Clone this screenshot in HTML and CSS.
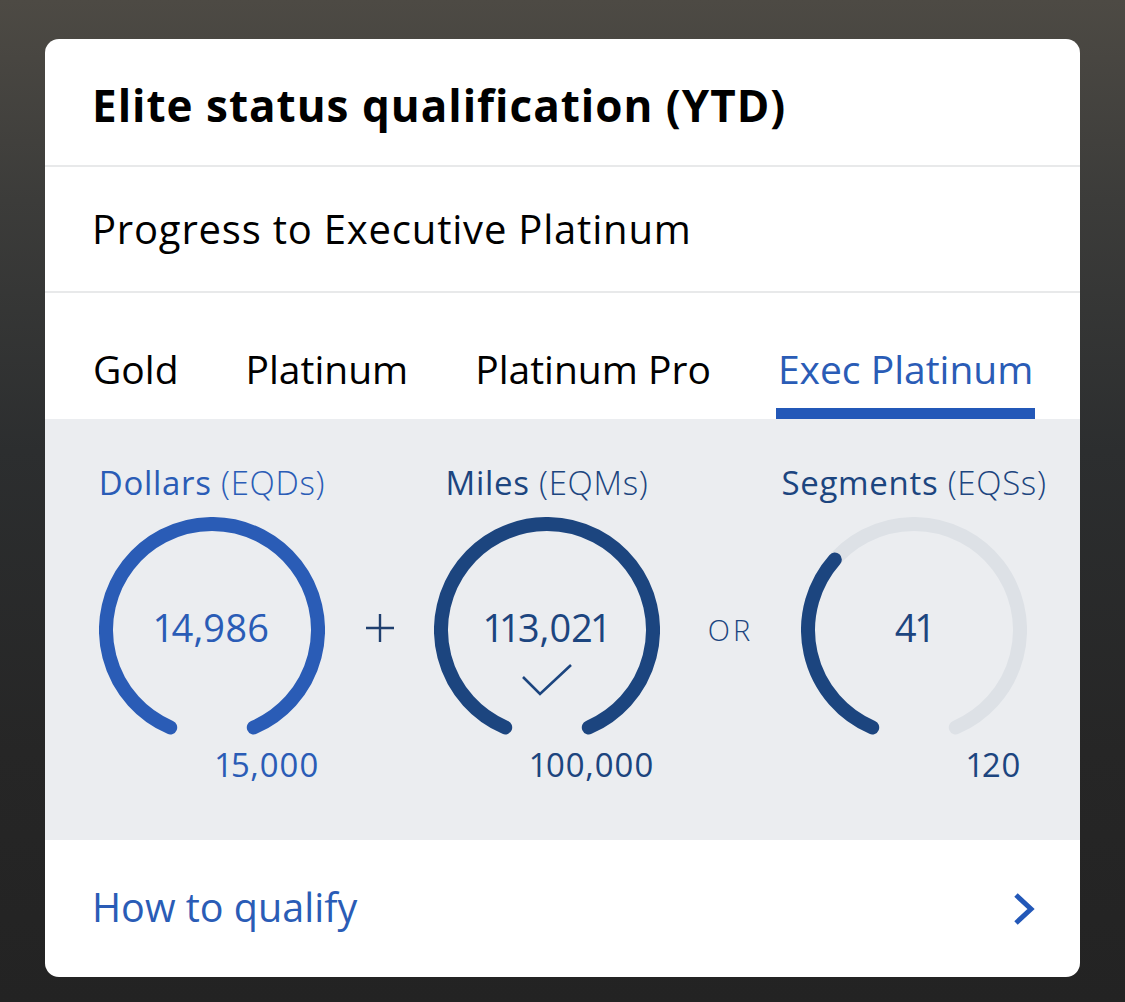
FILE: index.html
```html
<!DOCTYPE html>
<html lang="en">
<head>
<meta charset="utf-8">
<title>Elite status qualification</title>
<link rel="stylesheet" href="styles.css">
</head>
<body>
<div class="card">
  <div class="section title-row">
    <h1 class="title">Elite status qualification (YTD)</h1>
  </div>
  <div class="section sub-row">
    <div class="subtitle">Progress to Executive Platinum</div>
  </div>
  <div class="tabs">
    <div class="tab">Gold</div>
    <div class="tab">Platinum</div>
    <div class="tab">Platinum Pro</div>
    <div class="tab active">Exec Platinum</div>
  </div>
  <div class="stats">
    <div class="label blue c1">Dollars <span class="paren">(EQDs)</span></div>
    <div class="label navy c3">Miles <span class="paren">(EQMs)</span></div>
    <div class="label navy c5">Segments <span class="paren">(EQSs)</span></div>

    <div class="gauge c1">
      <svg class="ring" width="226" height="226" viewBox="0 0 226 226">
        <path d="M 71.2 210.4 A 106 106 0 1 1 154.8 210.4" fill="none" stroke="#2a5cb6" stroke-width="14" stroke-linecap="round"/>
      </svg>
      <div class="value blue">14,986</div>
    </div>
    <div class="sep c2">
      <svg width="32" height="32" viewBox="0 0 32 32"><path d="M16 2 V30 M2 16 H30" stroke="#1f3f6e" stroke-width="2.4" fill="none"/></svg>
    </div>
    <div class="gauge c3">
      <svg class="ring" width="226" height="226" viewBox="0 0 226 226">
        <path d="M 71.2 210.4 A 106 106 0 1 1 154.8 210.4" fill="none" stroke="#1c457f" stroke-width="14" stroke-linecap="round"/>
      </svg>
      <div class="value navy">113,021</div>
      <svg class="check" width="52" height="34" viewBox="0 0 52 34"><path d="M2 14 L19 31 L50 2" fill="none" stroke="#1c457f" stroke-width="2.6"/></svg>
    </div>
    <div class="sep or c4">OR</div>
    <div class="gauge c5">
      <svg class="ring" width="226" height="226" viewBox="0 0 226 226">
        <path d="M 71.2 210.4 A 106 106 0 1 1 154.8 210.4" fill="none" stroke="#dde1e6" stroke-width="14" stroke-linecap="round"/>
        <path d="M 71.2 210.4 A 106 106 0 0 1 33.8 42.6" fill="none" stroke="#1c457f" stroke-width="14" stroke-linecap="round"/>
      </svg>
      <div class="value navy">41</div>
    </div>

    <div class="target blue c1">15,000</div>
    <div class="target navy c3">100,000</div>
    <div class="target navy c5">120</div>
  </div>
  <div class="footer">
    <span class="link">How to qualify</span>
    <svg class="chev" width="24" height="34" viewBox="0 0 24 34"><path d="M4 3 L19 17 L4 31" fill="none" stroke="#2358b8" stroke-width="5"/></svg>
  </div>
</div>
</body>
</html>
```

FILE: styles.css
```css
* { box-sizing: border-box; }
html, body { margin: 0; padding: 0; }
body {
  width: 1125px;
  height: 1002px;
  overflow: hidden;
  font-family: "Open Sans", "Noto Sans", sans-serif;
  background: linear-gradient(180deg, #4d4a44 0%, #3c3c3a 20%, #2c2e2f 45%, #262626 75%, #232323 100%);
  padding: 39px 45px 0 45px;
}
.card {
  width: 1035px;
  height: 938px;
  background: #ffffff;
  border-radius: 14px;
  overflow: hidden;
  display: flex;
  flex-direction: column;
}
.section {
  display: flex;
  align-items: center;
  padding: 0 47px;
  border-bottom: 2px solid #e8e9ea;
}
.title-row { height: 128px; padding-top: 6px; }
.sub-row { height: 126px; }
.title {
  margin: 0;
  font-size: 44px;
  font-weight: 700;
  letter-spacing: 1px;
  color: #000;
  line-height: 56px;
}
.subtitle {
  font-size: 40px;
  letter-spacing: 0.8px;
  color: #000;
  line-height: 54px;
}
.tabs {
  height: 126px;
  display: flex;
  align-items: flex-end;
  gap: 63px;
  padding-left: 46px;
}
.tab {
  font-size: 39px;
  line-height: 54px;
  color: #000;
  padding: 0 2px 12px;
  border-bottom: 11px solid transparent;
}
.tab.active {
  color: #2a5cb6;
  border-bottom-color: #2358b8;
}
.stats {
  height: 421px;
  background: #ebedf0;
  display: grid;
  grid-template-columns: 270px 65px 270px 97px 270px;
  grid-template-rows: 40px 226px 40px;
  row-gap: 14px;
  padding: 44px 0 0 32px;
}
.stats > .target { margin-top: -12px; }
.c1 { grid-column: 1; }
.c2 { grid-column: 2; }
.c3 { grid-column: 3; }
.c4 { grid-column: 4; }
.c5 { grid-column: 5; }
.blue { color: #2a5cb6; }
.navy { color: #1c457f; }
.label {
  grid-row: 1;
  justify-self: center;
  white-space: nowrap;
  font-size: 33px;
  letter-spacing: 0.7px;
  line-height: 40px;
}
.paren { font-weight: 300; }
.gauge {
  grid-row: 2;
  justify-self: center;
  width: 226px;
  height: 226px;
  display: grid;
}
.gauge > * { grid-area: 1 / 1; }
.ring { display: block; }
.value {
  align-self: center;
  justify-self: center;
  font-size: 38px;
  line-height: 50px;
  margin-top: -6px;
  font-feature-settings: "pnum" 1;
}
.check {
  align-self: start;
  justify-self: center;
  margin-top: 146px;
}
.sep {
  grid-row: 2;
  align-self: center;
  justify-self: center;
  display: flex;
  margin-top: -4px;
}
.or {
  font-size: 29px;
  letter-spacing: 3px;
  color: #1c457f;
  font-weight: 300;
  margin-top: -2px;
}
.target {
  grid-row: 3;
  justify-self: center;
  width: 226px;
  text-align: right;
  padding-right: 6px;
  font-size: 33px;
  letter-spacing: 0.6px;
  line-height: 40px;
  font-feature-settings: "pnum" 1;
}
.footer {
  flex: 1;
  display: flex;
  align-items: center;
  justify-content: space-between;
  padding: 0 44px 0 47px;
}
.link {
  font-size: 39.5px;
  color: #2a5cb6;
  line-height: 54px;
  margin-top: -4px;
}
.chev { display: block; }
```
